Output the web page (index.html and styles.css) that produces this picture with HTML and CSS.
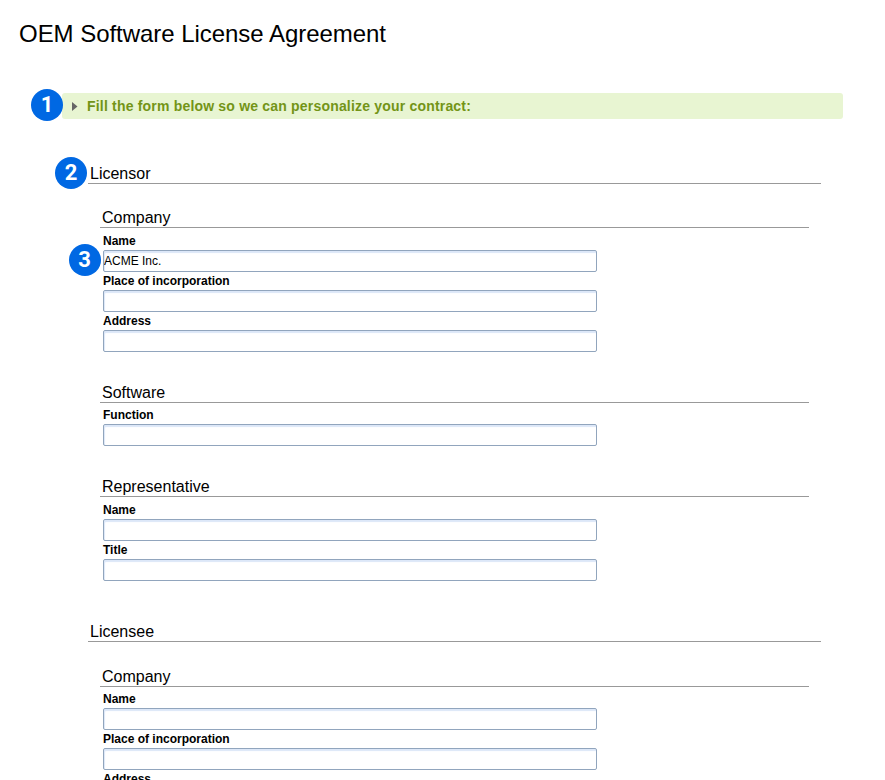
FILE: index.html
```html
<!DOCTYPE html>
<html lang="en">
<head>
<meta charset="utf-8">
<title>OEM Software License Agreement</title>
<link rel="stylesheet" href="styles.css">
</head>
<body>
<h1><span>OEM Software License Agreement</span></h1>
<form>
  <div class="banner">
    <span class="badge">1</span>
    <svg class="arrow" width="6" height="9" viewBox="0 0 6 9"><path d="M0 0L5.5 4.5L0 9Z"/></svg>
    <span class="banner-text">Fill the form below so we can personalize your contract:</span>
  </div>

  <section class="party">
    <h2><span class="badge">2</span>Licensor</h2>
    <div class="group">
      <h3>Company</h3>
      <label class="field"><span>Name</span><span class="badge">3</span><input type="text" value="ACME Inc."></label>
      <label class="field"><span>Place of incorporation</span><input type="text"></label>
      <label class="field"><span>Address</span><input type="text"></label>
    </div>
    <div class="group">
      <h3>Software</h3>
      <label class="field"><span>Function</span><input type="text"></label>
    </div>
    <div class="group">
      <h3>Representative</h3>
      <label class="field"><span>Name</span><input type="text"></label>
      <label class="field"><span>Title</span><input type="text"></label>
    </div>
  </section>

  <section class="party">
    <h2>Licensee</h2>
    <div class="group">
      <h3>Company</h3>
      <label class="field"><span>Name</span><input type="text"></label>
      <label class="field"><span>Place of incorporation</span><input type="text"></label>
      <label class="field"><span>Address</span></label>
    </div>
  </section>
</form>
</body>
</html>
```

FILE: styles.css
```css
* {
  box-sizing: border-box;
}

body {
  margin: 0;
  height: 780px;
  overflow: hidden;
  background: #fff;
  color: #000;
  font-family: "Liberation Sans", Arial, sans-serif;
}

h1, h2, h3 {
  margin: 0;
  font-weight: normal;
}

h1 {
  padding: 19px 0 0 19px;
  height: 93px;
  font-size: 24px;
  line-height: 30px;
  letter-spacing: -0.04px;
}

.banner {
  position: relative;
  display: flex;
  align-items: center;
  width: 781px;
  height: 26px;
  margin: 0 0 41px 62px;
  padding-left: 10px;
  border-radius: 3px;
  background: #e8f5d2;
}

.arrow {
  margin-right: 9px;
  fill: #666;
}

.banner-text {
  color: #739417;
  font-size: 14px;
  font-weight: bold;
  letter-spacing: 0.19px;
}

.party {
  width: 733px;
  margin-left: 88px;
  padding-bottom: 10.55px;
}

.party:last-child {
  padding-bottom: 0;
}

h2, h3 {
  position: relative;
  height: 24px;
  padding-left: 2px;
  border-bottom: 1px solid #999;
  font-size: 16px;
  line-height: 28px;
}

h2 {
  margin-bottom: 20.4px;
}

.group {
  margin: 0 12px;
  padding-bottom: 27px;
}

h3 {
  margin-bottom: 3.25px;
}

.field {
  position: relative;
  display: block;
  height: 40.15px;
  margin-left: 3px;
  font-size: 12px;
  font-weight: bold;
  line-height: 18.15px;
}

.field:last-child {
  margin-bottom: -0.1px;
}

.field > span:first-child {
  display: block;
  height: 18.05px;
}

.field input {
  display: block;
  width: 494px;
  height: 22px;
  margin: 0;
  padding: 0;
  border: 1px solid #91a5bd;
  border-radius: 2px;
  outline: 0;
  background: #fff;
  box-shadow: inset 1px 2px 1px #dce7f8;
  color: #000;
  font: 12px "Liberation Sans", Arial, sans-serif;
}

.badge {
  position: absolute;
  width: 32px;
  height: 32px;
  border-radius: 50%;
  background: #0068e3;
  color: #fff;
  font: bold 22px/32px Roboto, sans-serif;
  text-align: center;
}

.banner .badge {
  left: -31px;
  top: -4px;
}

h2 .badge {
  left: -33px;
  top: -3px;
}

.field .badge {
  left: -34.5px;
  top: 12.8px;
}
```
